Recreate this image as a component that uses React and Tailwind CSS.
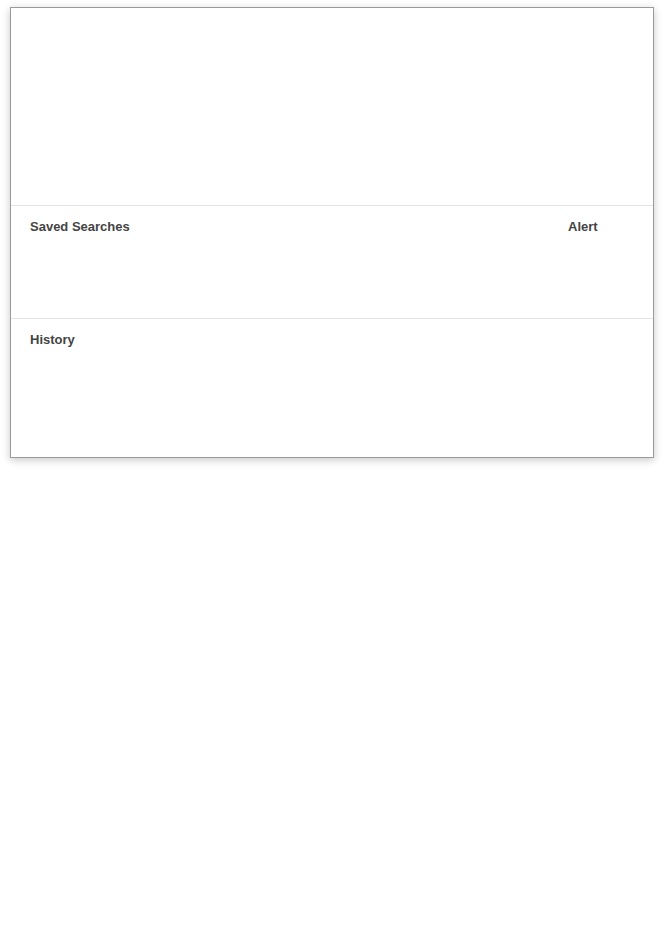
import React from 'react'

const SectionTitle = ({ children }) => (
  <h3 className="text-[13px] leading-[17px] font-bold text-[#444]">{children}</h3>
)

export default function App() {
  return (
    <div className="min-h-[937px] bg-white pt-[7px] px-[10px] font-['Liberation_Sans',Arial,sans-serif]">
      <div className="w-[644px] border border-[#9a9a9a] bg-white shadow-[0_2px_8px_rgba(0,0,0,0.22)] flex flex-col">
        {/* search area */}
        <div className="h-[198px] border-b border-[#e3e3e3]" />

        {/* saved searches */}
        <div className="h-[113px] border-b border-[#e3e3e3] px-[19px] pt-[12px]">
          <div className="flex justify-between">
            <SectionTitle>Saved Searches</SectionTitle>
            <div className="w-[66px]">
              <SectionTitle>Alert</SectionTitle>
            </div>
          </div>
        </div>

        {/* history */}
        <div className="h-[138px] px-[19px] pt-[12px]">
          <SectionTitle>History</SectionTitle>
        </div>
      </div>
    </div>
  )
}
